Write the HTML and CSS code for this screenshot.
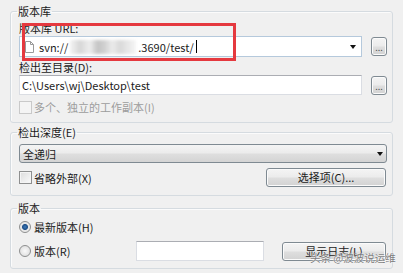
FILE: index.html
```html
<!DOCTYPE html>
<html>
  <head>
    <meta charset="UTF-8" />
    <title>检出</title>
    <link rel="stylesheet" href="styles.css">
  </head>
  <body>
    <div class="dialog">
      <fieldset class="group group-repo">
        <legend>版本库</legend>
        <div class="label label-url">版本库 URL:</div>
        <div class="row">
          <div class="edit edit-url">
            <svg class="file-icon" width="9" height="12" viewBox="0 0 9 12">
              <path d="M0.5 0.5 H5.5 L8.5 3.5 V11.5 H0.5 Z" fill="#fff" stroke="#9a9a9a" />
              <path d="M5.5 0.5 V3.5 H8.5" fill="none" stroke="#9a9a9a" />
            </svg>
            <span class="url-text">svn://</span><span class="smudge"></span><span class="url-text">.3690/test/</span><span class="caret"></span>
            <span class="arrow"></span>
          </div>
          <button class="dots">...</button>
        </div>
        <div class="label label-dir">检出至目录(D):</div>
        <div class="row">
          <div class="edit edit-dir">C:\Users\wj\Desktop\test</div>
          <button class="dots">...</button>
        </div>
        <div class="check check-multi disabled"><span class="box"></span>多个、独立的工作副本(I)</div>
      </fieldset>

      <fieldset class="group group-depth">
        <legend>检出深度(E)</legend>
        <div class="select">全递归<span class="arrow"></span></div>
        <div class="row row-ext">
          <div class="check"><span class="box"></span>省略外部(X)</div>
          <button class="btn btn-options">选择项(C)...</button>
        </div>
      </fieldset>

      <fieldset class="group group-rev">
        <legend>版本</legend>
        <div class="radio radio-head"><span class="dot on"></span>最新版本(H)</div>
        <div class="row row-rev">
          <div class="radio"><span class="dot"></span>版本(R)</div>
          <div class="edit edit-rev"></div>
          <button class="btn btn-log">显示日志(L)</button>
        </div>
      </fieldset>

      <div class="mark"></div>
      <div class="watermark">头条 @波波说运维</div>
    </div>
  </body>
</html>
```

FILE: styles.css
```css
body {
  margin: 0;
  width: 403px;
  height: 273px;
  overflow: hidden;
  background-color: #f0f0f0;
  font-family: "Noto Sans CJK SC", sans-serif;
  font-size: 11px;
  line-height: 14px;
  color: #1b1b1b;
}

.dialog {
  position: relative;
  padding: 4px 10px 0 10px;
}

.group {
  margin: 0;
  border: 1px solid #d5dbe0;
  border-radius: 3px;
  padding: 0 5px 8px 8px;
  box-shadow: inset 1px 1px #fbfbfb;
}
.group legend {
  padding: 0 1px;
  margin-left: -2px;
}
.group-depth {
  margin-top: 2px;
}
.group-rev {
  margin-top: 5px;
  padding-bottom: 7px;
}

.row {
  display: flex;
  align-items: center;
}

.label-url {
  margin-top: 3px;
}
.label-dir {
  margin-top: 3px;
}
.label-url + .row {
  margin-top: 1px;
}
.label-dir + .row {
  margin-top: 1px;
}

.edit {
  box-sizing: border-box;
  background-color: #fff;
  border: 1px solid #dadde3;
  border-top-color: #abadb3;
  display: flex;
  align-items: center;
}
.edit-url {
  width: 343px;
  height: 21px;
  border-color: #b5c9dc;
  padding-left: 5px;
}
.edit-dir {
  width: 343px;
  height: 20px;
  padding-left: 2px;
}
.edit-rev {
  width: 128px;
  height: 20px;
}

.file-icon {
  margin-right: 5px;
}
.smudge {
  display: inline-block;
  width: 66px;
  height: 14px;
  margin: 0 2px 0 2px;
  background: linear-gradient(90deg, #f4f4f4, #d6d6d6 15%, #eeeeee 30%, #c4c4c4 42%, #d0d0d0 52%, #ebebeb 64%, #d9d9d9 76%, #f6f6f6);
  filter: blur(1.5px);
}
.caret {
  display: inline-block;
  width: 1px;
  height: 13px;
  margin-left: 2px;
  background-color: #000;
}
.arrow {
  width: 0;
  height: 0;
  border-left: 3px solid transparent;
  border-right: 3px solid transparent;
  border-top: 4px solid #111;
  margin-left: auto;
  margin-right: 5px;
}

.dots,
.btn {
  font-family: inherit;
  box-sizing: border-box;
  border: 1px solid #7f8a92;
  border-radius: 3px;
  background: linear-gradient(#f4f4f4, #ececec 45%, #dedede 55%, #d2d2d2);
  box-shadow: inset 0 0 0 1px #fbfbfb;
  color: #1b1b1b;
  padding: 0;
}
.dots {
  width: 16px;
  height: 19px;
  margin-left: 9px;
  font-size: 9px;
  line-height: 19px;
  color: #555;
}
.btn {
  height: 19px;
  font-size: 11px;
  line-height: 15px;
}

.check,
.radio {
  display: flex;
  align-items: center;
}
.check-multi {
  margin-top: 5px;
}
.disabled {
  color: #9d9d9d;
}
.box {
  box-sizing: border-box;
  width: 13px;
  height: 13px;
  margin-right: 2px;
  border: 1px solid #8e8f8f;
  background: linear-gradient(135deg, #dcdcdc, #fafafa);
  box-shadow: inset 0 0 0 1px #f4f4f4;
}
.disabled .box {
  border-color: #c9c9c9;
  background: #f4f4f4;
}

.select {
  box-sizing: border-box;
  margin-top: 5px;
  height: 19px;
  border: 1px solid #7f8a92;
  border-radius: 3px;
  background: linear-gradient(#f4f4f4, #ececec 45%, #dedede 55%, #d4d4d4);
  display: flex;
  align-items: center;
  padding-left: 3px;
}
.select .arrow {
  margin-right: 3px;
}

.row-ext {
  margin-top: 5px;
}
.btn-options {
  width: 120px;
  margin-left: auto;
  margin-right: 1px;
}

.radio-head {
  margin-top: 5px;
}
.dot {
  box-sizing: border-box;
  width: 12px;
  height: 12px;
  margin-right: 3px;
  border: 1px solid #8e8f8f;
  border-radius: 50%;
  background: radial-gradient(circle, #fafafa, #d8d8d8);
}
.dot.on {
  background: radial-gradient(circle, #3d7ab8 0, #1d4f8a 2.5px, #e6e6e6 3.5px, #f4f4f4);
}
.row-rev {
  margin-top: 7px;
}
.row-rev .radio {
  width: 117px;
}
.btn-log {
  width: 104px;
  height: 19px;
  margin-left: 18px;
}

.mark {
  position: absolute;
  left: 22px;
  top: 23px;
  width: 214px;
  height: 38px;
  box-sizing: border-box;
  border: 3px solid #e5393f;
}
.watermark {
  position: absolute;
  left: 310px;
  top: 251px;
  font-size: 10.5px;
  line-height: 14px;
  color: #7c7c7c;
  text-shadow: 0 0 2px #fff, 0 0 1px #fff;
  white-space: nowrap;
}
```
